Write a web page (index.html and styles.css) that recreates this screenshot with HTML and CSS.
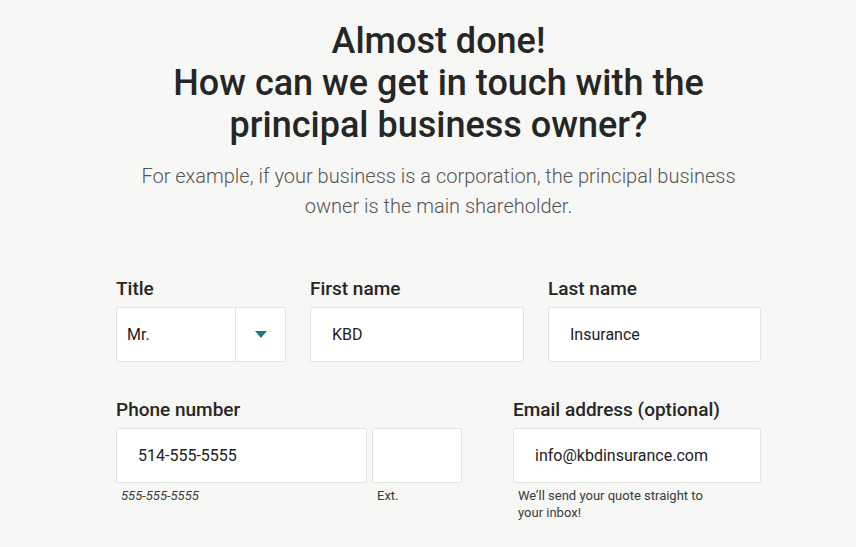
FILE: index.html
```html
<!DOCTYPE html>
<html>
<head>
    <meta charset="UTF-8">
    <meta name="viewport" content="width=device-width, initial-scale=1.0">
    <title>Contact</title>
    <link rel="stylesheet" href="styles.css">
</head>
<body>
<div class="page">
    <h1 class="heading">Almost done!<br>How can we get in touch with the<br>principal business owner?</h1>
    <p class="intro">For example, if your business is a corporation, the principal business owner is the main shareholder.</p>

    <form class="contact-form">
        <div class="row row-names">
            <div class="field">
                <label>Title</label>
                <div class="select">
                    <span class="select-value">Mr.</span>
                    <span class="select-arrow">
                        <svg width="12" height="8" viewBox="0 0 12 8"><path d="M0 0 L12 0 L6 7 Z" fill="#137f83"/></svg>
                    </span>
                </div>
            </div>
            <div class="field">
                <label for="first-name">First name</label>
                <input type="text" id="first-name" value="KBD">
            </div>
            <div class="field">
                <label for="last-name">Last name</label>
                <input type="text" id="last-name" value="Insurance">
            </div>
        </div>

        <div class="row row-contact">
            <div class="field">
                <label for="phone">Phone number</label>
                <div class="phone-group">
                    <div class="phone-main">
                        <input type="text" id="phone" value="514-555-5555">
                        <p class="hint hint-italic">555-555-5555</p>
                    </div>
                    <div class="phone-ext">
                        <input type="text" id="ext" value="">
                        <p class="hint">Ext.</p>
                    </div>
                </div>
            </div>
            <div class="field">
                <label for="email">Email address (optional)</label>
                <input type="text" id="email" value="info@kbdinsurance.com">
                <p class="hint hint-email">We’ll send your quote straight to your inbox!</p>
            </div>
        </div>
    </form>
</div>
</body>
</html>
```

FILE: styles.css
```css
body {
    margin: 0;
    background-color: #f7f7f5;
    font-family: Roboto, "Liberation Sans", Arial, sans-serif;
    color: #222;
}
.page {
    width: 645px;
    margin-left: 116px;
    padding-top: 20px;
}
.heading {
    margin: 0;
    font-size: 36px;
    line-height: 42px;
    font-weight: 500;
    text-align: center;
    color: #262626;
}
.intro {
    max-width: 600px;
    margin: 15px auto 0;
    font-size: 20px;
    line-height: 30px;
    font-weight: 300;
    text-align: center;
    color: #555;
}
.contact-form {
    margin-top: 56px;
}
.row {
    display: grid;
}
.row-names {
    grid-template-columns: 170px 214px 213px;
    column-gap: 24px;
}
.row-contact {
    grid-template-columns: 346px 248px;
    column-gap: 51px;
    margin-top: 36px;
}
.field label {
    display: block;
    font-size: 19px;
    line-height: 24px;
    font-weight: 500;
    color: #262626;
    margin-bottom: 6px;
}
.field input[type="text"] {
    box-sizing: border-box;
    width: 100%;
    height: 55px;
    padding: 0 21px;
    border: 1px solid #e2e2e0;
    border-radius: 2px;
    background-color: #fff;
    font-family: inherit;
    font-size: 16px;
    color: #222;
    outline: none;
}
.select {
    box-sizing: border-box;
    display: flex;
    height: 55px;
    border: 1px solid #e2e2e0;
    border-radius: 2px;
    background-color: #fff;
}
.select-value {
    flex: 1;
    display: flex;
    align-items: center;
    padding-left: 10px;
    font-size: 16px;
    color: #222;
}
.select-arrow {
    width: 49px;
    display: flex;
    align-items: center;
    justify-content: center;
    border-left: 1px solid #e2e2e0;
}
.phone-group {
    display: flex;
    gap: 5px;
}
.phone-main {
    width: 251px;
}
.phone-ext {
    width: 90px;
}
.hint {
    margin: 4px 0 0 5px;
    font-size: 13px;
    line-height: 17px;
    color: #3a3a3a;
}
.hint-italic {
    font-style: italic;
}
.hint-email {
    width: 200px;
}
```
